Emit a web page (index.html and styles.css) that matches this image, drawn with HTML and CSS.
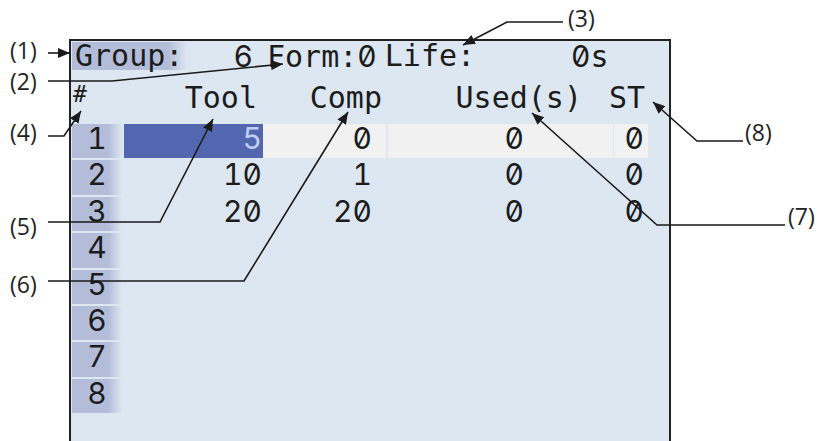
FILE: index.html
```html
<!DOCTYPE html>
<html lang="en">
    <head>
        <meta charset="UTF-8">
        <meta name="viewport" content="width=device-width, initial-scale=1.0">
        <title>Tool Life</title>
        <link rel="stylesheet" href="styles.css">
    </head>
    <body>
        <div class="page">
            <div class="panel">
                <!--Linha do Grupo-->
                <div class="topline">
                    <span class="lbl">Group:</span>
                    <span class="grp num">6</span>
                    <span class="form">Form:<span class="num">0</span></span>
                    <span class="life">Life:</span>
                    <span class="secs"><span class="num">0</span>s</span>
                </div>
                <!--Cabeçalho da Tabela-->
                <div class="head">
                    <div class="hash">#</div>
                    <div class="h tool">Tool</div>
                    <div class="h comp">Comp</div>
                    <div class="h used">Used(s)</div>
                    <div class="h st">ST</div>
                </div>
                <div class="rows">
                    <div class="row sel">
                        <div class="no">1</div>
                        <div class="c tool">5</div>
                        <div class="c comp">0</div>
                        <div class="c used">0</div>
                        <div class="c st">0</div>
                    </div>
                    <div class="row">
                        <div class="no">2</div>
                        <div class="c tool">10</div>
                        <div class="c comp">1</div>
                        <div class="c used">0</div>
                        <div class="c st">0</div>
                    </div>
                    <div class="row">
                        <div class="no">3</div>
                        <div class="c tool">20</div>
                        <div class="c comp">20</div>
                        <div class="c used">0</div>
                        <div class="c st">0</div>
                    </div>
                    <div class="row"><div class="no">4</div></div>
                    <div class="row"><div class="no">5</div></div>
                    <div class="row"><div class="no">6</div></div>
                    <div class="row"><div class="no">7</div></div>
                    <div class="row"><div class="no">8</div></div>
                </div>
            </div>

            <!--Legendas-->
            <svg class="callouts" width="819" height="441" viewBox="0 0 819 441">
                <defs>
                    <marker id="ah" viewBox="0 0 12 10" refX="12" refY="5" markerWidth="12" markerHeight="10" markerUnits="userSpaceOnUse" orient="auto">
                        <path d="M0 0 L12 5 L0 10 z" fill="#1a1a1a"/>
                    </marker>
                </defs>
                <g fill="none" stroke="#1a1a1a" stroke-width="1.6" marker-end="url(#ah)">
                    <path d="M48 53 H70"/>
                    <path d="M48 81 H112 L283 64"/>
                    <path d="M563 22 H507 L463 45"/>
                    <path d="M48 136 H64 L81 111"/>
                    <path d="M48 222 H160 L213 119"/>
                    <path d="M48 281 H244 L348 112"/>
                    <path d="M785 225 H657 L532 113"/>
                    <path d="M743 141 H697 L653 102"/>
                </g>
            </svg>
            <span class="tag t1">(1)</span>
            <span class="tag t2">(2)</span>
            <span class="tag t3">(3)</span>
            <span class="tag t4">(4)</span>
            <span class="tag t5">(5)</span>
            <span class="tag t6">(6)</span>
            <span class="tag t7">(7)</span>
            <span class="tag t8">(8)</span>
        </div>
    </body>
</html>
```
FILE: styles.css
```css
/*Reset*/
html,
body {
    margin: 0;
    padding: 0;
}

*, *::before, *::after {
    box-sizing: border-box;
}

body {
    background: #fff;
    overflow: hidden;
    font-family: "DejaVu Sans Mono", monospace;
}

.page {
    position: relative;
    width: 819px;
    height: 441px;
    padding: 39px 0 0 69px;
}

/*Painel*/

.panel {
    width: 602px;
    height: 410px;
    border: 2px solid #222;
    border-bottom: 0;
    padding-left: 1px;
    background: #dde7f1;
    color: #1c1c1c;
    font-size: 30px;
}

/*Números com zero cortado*/
.num,
.c,
.no {
    font-family: Inter, "DejaVu Sans Mono", monospace;
    font-weight: 400;
    font-feature-settings: "tnum" 1, "zero" 1;
}

.topline {
    display: flex;
    margin-top: 1px;
    height: 28px;
    line-height: 28px;
    white-space: pre;
}

.lbl {
    width: 115px;
    padding-left: 3px;
    background: linear-gradient(90deg, #b3bcd9 0, #b3bcd9 96px, #dde7f1 115px);
}

.grp {
    width: 66px;
    text-align: right;
}

.form {
    margin-left: 14px;
}

.life {
    margin-left: 8px;
}

.secs {
    margin-left: 96px;
}

/*Tabela*/

.head {
    display: flex;
    height: 52px;
    padding-top: 14px;
    line-height: 28px;
    white-space: pre;
}

.hash {
    width: 52px;
    margin-top: -1px;
    padding-left: 1px;
    font-size: 23px;
    line-height: 23px;
}

.h {
    text-align: right;
}

.h.tool {
    width: 139px;
    padding-right: 6px;
}

.h.comp {
    width: 125px;
    padding-right: 6px;
}

.h.used {
    width: 221px;
    padding-right: 27px;
}

.h.st {
    width: 36px;
}

.rows {
    display: flex;
    flex-direction: column;
    gap: 2px;
    margin-top: 2px;
}

.row {
    display: flex;
    height: 34.4px;
    line-height: 28px;
}

.no {
    width: 50px;
    margin-right: 2px;
    text-align: center;
    background: linear-gradient(90deg, #b3bcd9 0, #b3bcd9 36px, #dde7f1 50px);
}

.c {
    text-align: right;
    background-clip: padding-box;
}

.c.tool {
    width: 139px;
    padding-right: 1px;
}

.c.comp {
    width: 125px;
    padding-right: 14px;
    border-right: 2px solid transparent;
}

.c.used {
    width: 226px;
    padding-right: 89px;
    border-right: 1px solid transparent;
}

.c.st {
    width: 34px;
    padding-right: 4px;
}

.sel .tool {
    background-color: #5366b0;
    color: #c3cff0;
}

.sel .comp,
.sel .used,
.sel .st {
    background-color: #f1f1f1;
}

/*Legendas*/

.callouts {
    position: absolute;
    left: 0;
    top: 0;
    pointer-events: none;
}

.tag {
    position: absolute;
    font-family: "Open Sans", sans-serif;
    font-size: 23px;
    line-height: 22px;
    color: #222;
}

.t1 { left: 10px; top: 39px; }
.t2 { left: 10px; top: 70px; }
.t3 { left: 568px; top: 7px; }
.t4 { left: 10px; top: 121px; }
.t5 { left: 10px; top: 215px; }
.t6 { left: 10px; top: 273px; }
.t7 { left: 788px; top: 205px; }
.t8 { left: 745px; top: 121px; }
```
